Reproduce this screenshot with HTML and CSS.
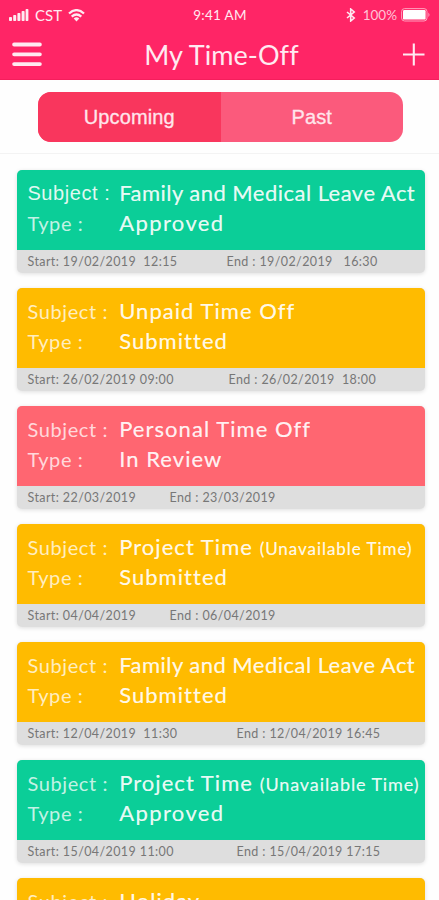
FILE: index.html
```html
<!DOCTYPE html>
<html lang="en">
<head>
<meta charset="utf-8">
<title>My Time-Off</title>
<link rel="stylesheet" href="styles.css">
</head>
<body>
<header class="header">
  <div class="status">
    <div class="status-left">
      <svg class="signal" width="20" height="12" viewBox="0 0 20 12" fill="currentColor"><rect x="0" y="8" width="3" height="4" rx=".8"/><rect x="4.2" y="6" width="3" height="6" rx=".8"/><rect x="8.4" y="4" width="3" height="8" rx=".8"/><rect x="12.6" y="2" width="3" height="10" rx=".8"/><rect x="16.6" y="0" width="2.8" height="12" rx=".8"/></svg>
      <span class="carrier">CST</span>
      <svg width="17" height="13" viewBox="0 0 17 13" fill="none" stroke="currentColor" stroke-width="2.3"><path d="M1 4.5Q8.5-2.2 16 4.5M3.7 7.6Q8.5 3.4 13.3 7.6"/><path d="M5.7 9.4Q8.5 7.1 11.3 9.4L8.5 12.5Z" fill="currentColor" stroke="none"/></svg>
    </div>
    <span class="clock">9:41 AM</span>
    <div class="status-right">
      <svg width="10" height="14" viewBox="0 0 10 14" fill="none" stroke="currentColor" stroke-width="1.6"><path d="M1 4L8.2 10L4.7 13V1L8.2 4L1 10"/></svg>
      <span class="percent">100%</span>
      <svg width="30" height="14" viewBox="0 0 30 14"><rect x=".6" y=".6" width="25.4" height="12.4" rx="3" fill="none" stroke="#ff9fbd" stroke-width="1"/><rect x="2" y="2" width="22.6" height="9.6" rx="1.2" fill="#fff"/><path d="M27.4 4.5Q29.6 6.8 27.4 9.1Z" fill="#ff9fbd"/></svg>
    </div>
  </div>
  <div class="navbar">
    <svg width="30" height="25" viewBox="0 0 30 25" stroke="currentColor" stroke-width="3.8" stroke-linecap="round"><path d="M2.1 2.5H27.9M2.1 12.3H27.9M2.1 22.1H27.9"/></svg>
    <h1 class="title">My Time-Off</h1>
    <svg width="22" height="24" viewBox="0 0 22 24" stroke="currentColor" stroke-width="2.1"><path d="M0 11.5H21.5M10.8 .5V22.5"/></svg>
  </div>
</header>
<nav class="tabs-bar">
  <div class="tabs"><span class="tab tab-active">Upcoming</span><span class="tab">Past</span></div>
</nav>
<main class="list">
  <article class="card approved">
    <div class="info"><span class="label label-strong">Subject :</span><span class="value value-long">Family and Medical Leave Act</span><span class="label">Type :</span><span class="value value-wide">Approved</span></div>
    <div class="dates dates-a"><span>Start: 19/02/2019&nbsp; 12:15</span><span>End : 19/02/2019&nbsp;&nbsp; 16:30</span></div>
  </article>
  <article class="card submitted">
    <div class="info"><span class="label">Subject :</span><span class="value">Unpaid Time Off</span><span class="label">Type :</span><span class="value">Submitted</span></div>
    <div class="dates dates-b"><span>Start: 26/02/2019 09:00</span><span>End : 26/02/2019&nbsp; 18:00</span></div>
  </article>
  <article class="card review">
    <div class="info"><span class="label">Subject :</span><span class="value">Personal Time Off</span><span class="label">Type :</span><span class="value">In Review</span></div>
    <div class="dates dates-day"><span>Start: 22/03/2019</span><span>End : 23/03/2019</span></div>
  </article>
  <article class="card submitted">
    <div class="info"><span class="label">Subject :</span><span class="value">Project Time <small class="note">(Unavailable Time)</small></span><span class="label">Type :</span><span class="value">Submitted</span></div>
    <div class="dates dates-day"><span>Start: 04/04/2019</span><span>End : 06/04/2019</span></div>
  </article>
  <article class="card submitted">
    <div class="info"><span class="label">Subject :</span><span class="value value-long">Family and Medical Leave Act</span><span class="label">Type :</span><span class="value">Submitted</span></div>
    <div class="dates dates-c"><span>Start: 12/04/2019&nbsp; 11:30</span><span>End : 12/04/2019 16:45</span></div>
  </article>
  <article class="card approved">
    <div class="info"><span class="label">Subject :</span><span class="value">Project Time <small class="note note-wide">(Unavailable Time)</small></span><span class="label">Type :</span><span class="value value-wide">Approved</span></div>
    <div class="dates dates-c"><span>Start: 15/04/2019 11:00</span><span>End : 15/04/2019 17:15</span></div>
  </article>
  <article class="card submitted">
    <div class="info"><span class="label">Subject :</span><span class="value">Holiday</span></div>
  </article>
</main>
</body>
</html>
```
FILE: styles.css
```css
* { box-sizing: border-box; }
body {
  margin: 0;
  height: 900px;
  overflow: hidden;
  background: #fefefe;
  font-family: Lato, "Liberation Sans", sans-serif;
}
svg { display: block; flex: none; }
.header {
  height: 80px;
  background: #ff2566;
  border-bottom: 1px solid #f51e5c;
  color: #ffeaf1;
}
.status {
  display: grid;
  grid-template-columns: 1fr auto 1fr;
  align-items: center;
  height: 30px;
  padding: 0 8px 0 9px;
  font-size: 14px;
  line-height: 30px;
}
.status-left, .status-right { display: flex; align-items: center; }
.status-right { justify-content: flex-end; }
.carrier { margin: 0 6px 0 6px; font-size: 15px; }
.clock { font-size: 13.5px; letter-spacing: .3px; }
.percent { margin: 0 4px 0 7px; font-size: 13.5px; color: #ffc4d6; }
.navbar {
  display: flex;
  align-items: center;
  justify-content: space-between;
  height: 49px;
  padding: 0 14px 0 12px;
}
.title { margin: 0 2px 0 0; font-size: 27px; font-weight: 400; letter-spacing: .1px; line-height: 40px; }
.tabs-bar {
  height: 74px;
  padding: 12px 36px 0 38px;
  border-bottom: 1px solid #f3f3f3;
}
.tabs { display: flex; height: 50px; border-radius: 13px; overflow: hidden; background: #fb5a7c; }
.tab {
  flex: 1;
  font: 20px/50px "Liberation Sans", sans-serif;
  letter-spacing: .15px;
  text-align: center;
  color: #ffe5eb;
  -webkit-text-stroke: .3px currentColor;
}
.tab-active { background: #f9365d; }
.list {
  display: flex;
  flex-direction: column;
  gap: 15px;
  height: 746px;
  padding: 16.3px 14px 0 17.3px;
  overflow: hidden;
}
.card {
  flex: none;
  height: 103px;
  border-radius: 5px;
  overflow: hidden;
  background: #dedede;
  box-shadow: 0 1px 4px rgba(0, 0, 0, .13);
}
.info {
  display: grid;
  grid-template-columns: 91.7px 1fr;
  grid-auto-rows: 29.5px;
  height: 80px;
  padding: 9px 0 0 10.2px;
  line-height: 29px;
  white-space: nowrap;
}
.approved .info { background: #0bce98; }
.submitted .info { background: #ffbb00; }
.review .info { background: #ff6671; }
.label { font-size: 20px; letter-spacing: .6px; color: rgba(255, 255, 255, .76); }
.label-strong {
  font-family: "Liberation Sans", sans-serif;
  letter-spacing: .55px;
  color: rgba(255, 255, 255, .88);
}
.value {
  font-size: 22px;
  line-height: 27px;
  letter-spacing: 1.05px;
  color: rgba(255, 255, 255, .92);
  -webkit-text-stroke: .2px currentColor;
}
.value-long { letter-spacing: .47px; }
.value-wide { letter-spacing: 1.4px; }
.note { font-size: 17px; letter-spacing: .95px; }
.note-wide { font-size: 18px; letter-spacing: .9px; }
.dates {
  display: grid;
  padding-left: 10.2px;
  font-size: 12.5px;
  line-height: 24px;
  letter-spacing: .4px;
  color: #777;
  white-space: nowrap;
}
.dates-a { grid-template-columns: 199px 1fr; }
.dates-b { grid-template-columns: 201px 1fr; }
.dates-c { grid-template-columns: 209px 1fr; }
.dates-day { grid-template-columns: 142px 1fr; }
```
